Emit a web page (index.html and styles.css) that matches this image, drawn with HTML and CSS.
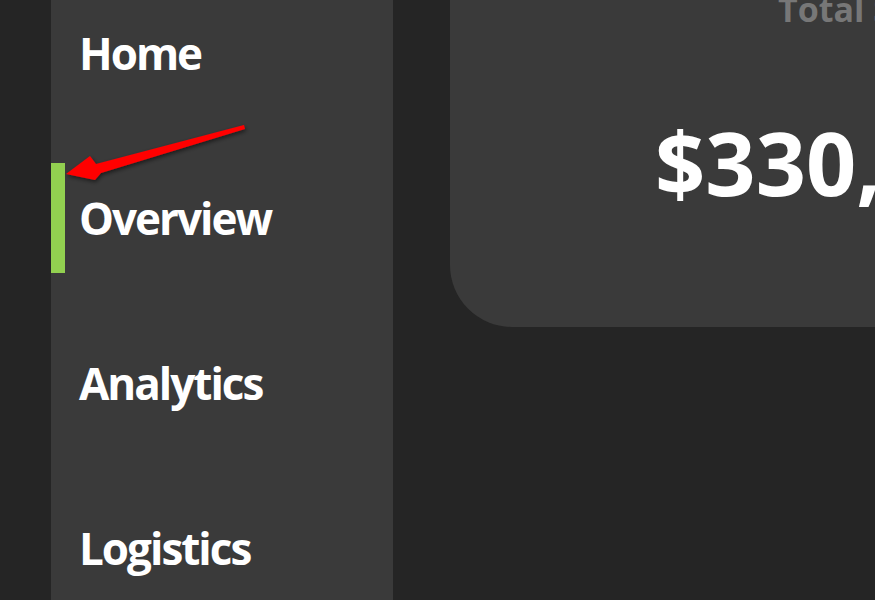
FILE: index.html
```html
<!DOCTYPE html>
<html lang="en">
<head>
<meta charset="utf-8">
<title>Dashboard</title>
<link rel="stylesheet" href="styles.css">
</head>
<body>
<div class="layout">
  <nav class="sidebar">
    <ul class="nav">
      <li class="nav-item">Home</li>
      <li class="nav-item active">Overview</li>
      <li class="nav-item">Analytics</li>
      <li class="nav-item">Logistics</li>
    </ul>
  </nav>
  <main class="main">
    <section class="card">
      <div class="card-label">Total Sales</div>
      <div class="card-value">$330,000</div>
    </section>
  </main>
</div>
<svg class="annotation" width="875" height="600" viewBox="0 0 875 600">
  <defs>
    <filter id="shadow" x="-20%" y="-50%" width="140%" height="200%">
      <feDropShadow dx="1" dy="2" stdDeviation="2" flood-color="#000" flood-opacity="0.55"/>
    </filter>
  </defs>
  <polygon class="arrow" filter="url(#shadow)" points="66,174 90,156 96,164 244,125 245,129 101,173 95,180"/>
</svg>
</body>
</html>
```
FILE: styles.css
```css
html, body {
  margin: 0;
  padding: 0;
}
body {
  background: #252525;
  font-family: "Open Sans", "Noto Sans", sans-serif;
  height: 600px;
  overflow: hidden;
  position: relative;
}
.layout {
  display: flex;
  height: 600px;
}
.sidebar {
  flex: none;
  margin-left: 51px;
  width: 342px;
  background: #3a3a3a;
}
.nav {
  list-style: none;
  margin: -2px 0 0;
  padding: 0;
  display: flex;
  flex-direction: column;
  gap: 55px;
}
.nav-item {
  position: relative;
  height: 110px;
  display: flex;
  align-items: center;
  padding-left: 28px;
  font-size: 44px;
  font-weight: 700;
  color: #ffffff;
  letter-spacing: -2px;
}
.nav-item.active::before {
  content: "";
  position: absolute;
  left: 0;
  top: 0;
  bottom: 0;
  width: 14px;
  background: #92d050;
}
.main {
  flex: 1;
  padding-left: 57px;
  overflow: hidden;
}
.card {
  width: 700px;
  height: 357px;
  margin-top: -30px;
  background: #3a3a3a;
  border-bottom-left-radius: 62px;
  box-sizing: border-box;
  padding-top: 22px;
  display: flex;
  flex-direction: column;
}
.card-label {
  padding-left: 328px;
  font-size: 34px;
  line-height: 1;
  font-weight: 700;
  color: #777777;
  white-space: nowrap;
}
.card-value {
  margin-top: 92px;
  padding-left: 205px;
  font-size: 88px;
  line-height: 1;
  font-weight: 700;
  color: #ffffff;
  white-space: nowrap;
}
.annotation {
  position: absolute;
  left: 0;
  top: 0;
  pointer-events: none;
}
.arrow {
  fill: #ff0000;
}
```
